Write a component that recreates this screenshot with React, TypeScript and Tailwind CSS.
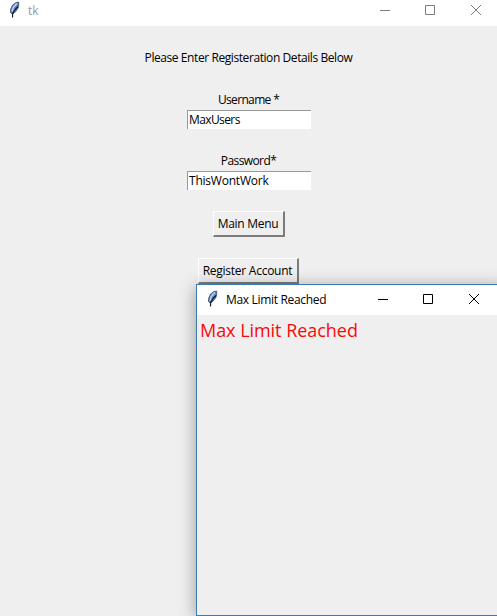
import type { ReactNode } from "react";

function Feather() {
  return (
    <svg width="11" height="17" viewBox="0 0 11 17" className="shrink-0">
      <path d="M3.3 13.2 1.5 11.5 1.7 8 3.5 4.2 6.5 1.8 9.6 1 9.8 4 8.8 7.5 6.5 10.8Z" fill="#5d83bd" stroke="#2a3a58" strokeWidth="0.7" />
      <path d="M3.1 10.5 4.2 6.5 7.8 2.6" fill="none" stroke="#bcd4f4" strokeWidth="1.5" />
      <path d="M3.5 16.5 3.7 12.5 6 8.5 9.2 5.5" fill="none" stroke="#0b1226" strokeWidth="1.1" />
    </svg>
  );
}

function Controls() {
  return (
    <svg width="106" height="12" viewBox="0 0 106 12" fill="none" stroke="currentColor" className="shrink-0">
      <path d="M0 5.5H10" />
      <path d="M45.5 .5h9v9h-9z" />
      <path d="M91 0 101 10M101 0 91 10" />
    </svg>
  );
}

function Field({ label, value, labelClass, valueClass }: { label: string; value: string; labelClass: string; valueClass: string }) {
  return (
    <div className="flex w-[124px] flex-col items-center">
      <div className={`h-5 whitespace-nowrap text-[12px] leading-5 ${labelClass}`}>{label}</div>
      <div className={`h-[19px] w-full border-t border-l border-t-[#9a9a9a] border-l-[#9a9a9a] bg-white pl-[1.5px] text-[12px] leading-[18px] ${valueClass}`}>
        {value}
      </div>
    </div>
  );
}

function Button({ className, children }: { className: string; children: ReactNode }) {
  return (
    <button
      className={`flex h-[26px] items-center justify-center border-t border-l border-r-2 border-b-2 border-t-white border-l-white border-r-[#7c7c7c] border-b-[#7c7c7c] text-[12px] leading-none whitespace-nowrap ${className}`}
    >
      {children}
    </button>
  );
}

export default function App() {
  return (
    <div className="relative h-[616px] w-[497px] overflow-hidden bg-[#efefef] font-['Open_Sans','Noto_Sans',sans-serif] text-black">
      <header className="flex h-[26px] bg-white text-[#7d7d7d]">
        <div className="pt-[1px] pl-[9px]"><Feather /></div>
        <span className="pl-[8px] text-[12px] leading-[21px] text-[#999999]">tk</span>
        <div className="ml-auto pt-[5px] pr-[11px]"><Controls /></div>
      </header>
      <main className="flex flex-col items-center">
        <p className="mt-[22px] h-5 text-[12px] leading-5 tracking-[-0.42px] whitespace-nowrap">Please Enter Registeration Details Below</p>
        <div className="mt-[22px]"><Field label="Username *" value="MaxUsers" labelClass="tracking-[-0.65px]" valueClass="tracking-[-0.6px]" /></div>
        <div className="mt-[22px]"><Field label="Password*" value="ThisWontWork" labelClass="tracking-[-0.6px]" valueClass="tracking-[-0.22px]" /></div>
        <Button className="mt-[21px] w-[72px] tracking-[-0.3px]">Main Menu</Button>
        <Button className="mt-[21px] w-[101px] pr-px tracking-[-0.25px]">Register Account</Button>
      </main>
      <section className="absolute top-[284px] left-[196px] h-[332px] w-[310px] border border-[#3b7cad] bg-[#efefef] shadow-[0_3px_16px_rgba(0,0,0,0.36)]">
        <header className="flex h-[30px] w-[300px] bg-white">
          <div className="pt-[5px] pl-[10px]"><Feather /></div>
          <span className="pl-[8px] text-[12px] leading-[29px] tracking-[-0.32px] whitespace-nowrap">Max Limit Reached</span>
          <div className="ml-auto pt-[9px] pr-[13px]"><Controls /></div>
        </header>
        <p className="pl-[3px] font-['Open_Sans',sans-serif] text-[18px] leading-[30px] tracking-[-0.04px] whitespace-nowrap text-[#fa0808]">Max Limit Reached</p>
      </section>
    </div>
  );
}
